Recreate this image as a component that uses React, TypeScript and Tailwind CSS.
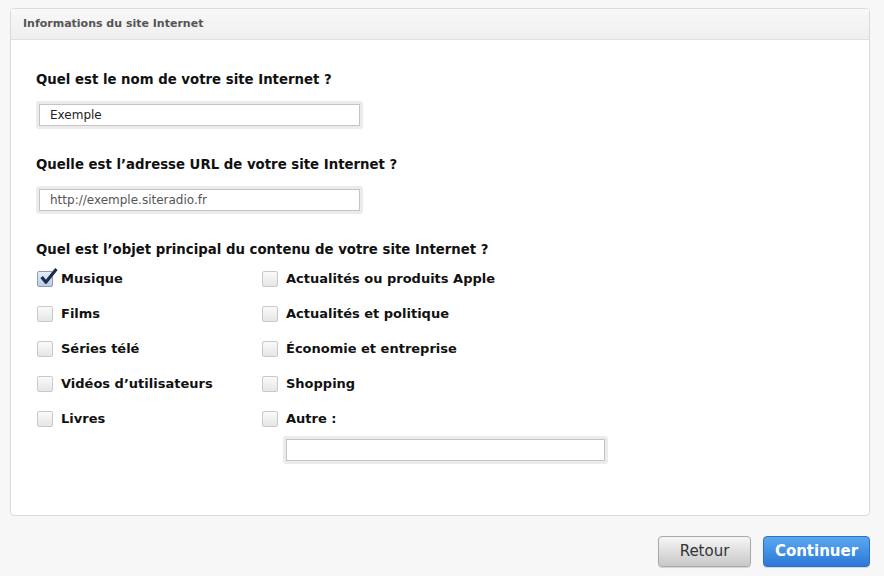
import type { ReactNode } from 'react'

const FONT = { fontFamily: '"DejaVu Sans", "Noto Sans", sans-serif' }

function Field({ value, placeholder, className = '' }: { value?: string; placeholder?: string; className?: string }) {
  return (
    <div className={`h-[28px] rounded-[3px] bg-[#ebebeb] p-[3px] ${className}`}>
      <div className="flex h-full items-center border border-[#c4c4c4] bg-white px-[10px] text-[12px] leading-none">
        {value ? <span className="text-[#222]">{value}</span> : <span className="text-[#555]">{placeholder}</span>}
      </div>
    </div>
  )
}

function Check({ checked, children }: { checked?: boolean; children: ReactNode }) {
  return (
    <label className="flex h-[35px] items-center">
      <span
        className={`relative ml-[1px] flex size-[16px] items-center justify-center rounded-[2px] border ${
          checked
            ? 'border-[#8a9bb5] bg-gradient-to-b from-[#e4eefb] to-[#b9cde9]'
            : 'border-[#c9c9c9] bg-gradient-to-b from-[#fafafa] to-[#e6e6e6]'
        }`}
      >
        {checked && (
          <svg viewBox="0 0 18 18" className="absolute -top-[5px] left-[1px] size-[19px]" aria-hidden="true">
            <path d="M2.5 9.5 L6.5 14.5 L16.5 2" fill="none" stroke="#1c2c4a" strokeWidth="3" strokeLinejoin="round" />
          </svg>
        )}
      </span>
      <span className="ml-[8px] text-[13px] font-bold text-[#111]">{children}</span>
    </label>
  )
}

export default function App() {
  return (
    <div className="h-[576px] w-[884px] bg-[#f7f7f7] pl-[10px] pr-[14px] pt-[8px]" style={FONT}>
      <section className="h-[508px] overflow-hidden rounded-[4px] border border-[#dadada] bg-white">
        <header className="flex h-[31px] items-center border-b border-[#e0e0e0] bg-gradient-to-b from-[#f8f8f8] to-[#efefef] pl-[12px]">
          <h1 className="text-[11px] font-bold text-[#555]">Informations du site Internet</h1>
        </header>

        <div className="pl-[25px] pt-[32px]">
          <p className="h-[16px] text-[13.3px] leading-[16px] font-bold text-[#111]">Quel est le nom de votre site Internet ?</p>
          <Field value="Exemple" className="mt-[13px] w-[327px]" />

          <p className="mt-[28px] h-[16px] text-[13.3px] leading-[16px] font-bold text-[#111]">
            Quelle est l’adresse URL de votre site Internet ?
          </p>
          <Field placeholder="http://exemple.siteradio.fr" className="mt-[13px] w-[327px]" />

          <p className="mt-[28px] h-[16px] text-[13.3px] leading-[16px] font-bold text-[#111]">
            Quel est l’objet principal du contenu de votre site Internet ?
          </p>

          <div className="mt-[3px] grid w-[500px] grid-cols-[225px_1fr]">
            <Check checked>Musique</Check>
            <Check>Actualités ou produits Apple</Check>
            <Check>Films</Check>
            <Check>Actualités et politique</Check>
            <Check>Séries télé</Check>
            <Check>Économie et entreprise</Check>
            <Check>Vidéos d’utilisateurs</Check>
            <Check>Shopping</Check>
            <Check>Livres</Check>
            <Check>Autre :</Check>
          </div>
          <Field className="ml-[247px] w-[325px]" />
        </div>
      </section>

      <div className="mt-[20px] flex justify-end gap-[12px]">
        <button
          type="button"
          className="h-[31px] w-[93px] rounded-[4px] border border-[#a9a9a9] bg-gradient-to-b from-[#f6f6f6] to-[#c8c8c8] text-[15px] text-[#333] shadow-[0_1px_1px_rgba(0,0,0,0.15)]"
        >
          Retour
        </button>
        <button
          type="button"
          className="h-[31px] w-[107px] rounded-[4px] border border-[#2f6fc4] bg-gradient-to-b from-[#5aa8f0] to-[#2b78d8] text-[15px] font-bold text-white shadow-[0_1px_1px_rgba(0,0,0,0.15)]"
        >
          Continuer
        </button>
      </div>
    </div>
  )
}
